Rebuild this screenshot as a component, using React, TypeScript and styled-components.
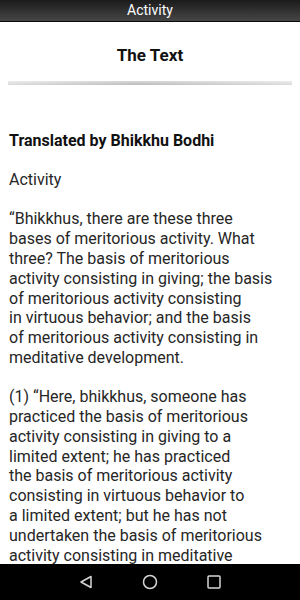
import {createGlobalStyle, styled} from 'styled-components';

const GlobalStyle = createGlobalStyle`
    html, body {
        margin: 0;
        padding: 0;
        background: #ffffff;
    }
    body {
        font-family: Roboto, 'Noto Sans', sans-serif;
    }
`

const Screen = styled.div`
    width: 300px;
    height: 600px;
    display: flex;
    flex-direction: column;
    overflow: hidden;
    background: #ffffff;
`

const TopBar = styled.header`
    height: 21px;
    flex: none;
    display: flex;
    align-items: center;
    justify-content: center;
    background: linear-gradient(180deg, #1b1b1b, #464646);
    border-bottom: 1px solid #0a0a0a;
    color: #ffffff;
    font-size: 14px;
    line-height: 21px;
`

const Content = styled.main`
    flex: 1;
    min-height: 0;
    overflow: hidden;
`

const Title = styled.h1`
    margin: 23px 0 16px;
    font-size: 17px;
    line-height: 20px;
    font-weight: bold;
    text-align: center;
    color: #111111;
`

const Divider = styled.div`
    height: 4px;
    margin: 0 8px;
    background:
        linear-gradient(180deg, rgba(255, 255, 255, 0.35), rgba(0, 0, 0, 0.04)),
        linear-gradient(90deg, #e3e3e3, #c2c2c2 45%, #d0d0d0 70%, #e3e3e3);
`

const Body = styled.section`
    padding: 46px 9px 0;
    display: flex;
    flex-direction: column;
    gap: 19.4px;
`

const Paragraph = styled.p<{$bold?: boolean}>`
    margin: 0;
    font-size: 16px;
    line-height: 19.8px;
    color: ${({$bold}) => ($bold ? '#111111' : '#262626')};
    font-weight: ${({$bold}) => ($bold ? 'bold' : 'normal')};
`

const Line = styled.span`
    display: block;
    white-space: nowrap;
`

const NavBar = styled.nav`
    height: 36px;
    flex: none;
    background: #000000;
    display: flex;
    align-items: center;
    justify-content: center;
`

const NavButton = styled.div`
    width: 64px;
    display: flex;
    justify-content: center;
    align-items: center;
`

const paragraphs: {bold?: boolean, lines: string[]}[] = [
    {bold: true, lines: ['Translated by Bhikkhu Bodhi']},
    {lines: ['Activity']},
    {
        lines: [
            '“Bhikkhus, there are these three',
            'bases of meritorious activity. What',
            'three? The basis of meritorious',
            'activity consisting in giving; the basis',
            'of meritorious activity consisting',
            'in virtuous behavior; and the basis',
            'of meritorious activity consisting in',
            'meditative development.',
        ],
    },
    {
        lines: [
            '(1) “Here, bhikkhus, someone has',
            'practiced the basis of meritorious',
            'activity consisting in giving to a',
            'limited extent; he has practiced',
            'the basis of meritorious activity',
            'consisting in virtuous behavior to',
            'a limited extent; but he has not',
            'undertaken the basis of meritorious',
            'activity consisting in meditative',
        ],
    },
]

export default function App() {
    return (
        <>
            <GlobalStyle/>
            <Screen>
                <TopBar>Activity</TopBar>
                <Content>
                    <Title>The Text</Title>
                    <Divider/>
                    <Body>
                        {paragraphs.map((p, i) => (
                            <Paragraph key={i} $bold={p.bold}>
                                {p.lines.map((line, j) => (
                                    <Line key={j}>{line}</Line>
                                ))}
                            </Paragraph>
                        ))}
                    </Body>
                </Content>
                <NavBar>
                    <NavButton>
                        <svg width="14" height="14" viewBox="0 0 14 14">
                            <path d="M12 1.5 L2 7 L12 12.5 Z" fill="none" stroke="#d6d6d6" strokeWidth="1.5" strokeLinejoin="round"/>
                        </svg>
                    </NavButton>
                    <NavButton>
                        <svg width="16" height="16" viewBox="0 0 16 16">
                            <circle cx="8" cy="8" r="6.5" fill="none" stroke="#d6d6d6" strokeWidth="1.5"/>
                        </svg>
                    </NavButton>
                    <NavButton>
                        <svg width="14" height="14" viewBox="0 0 14 14">
                            <rect x="1" y="1" width="12" height="12" rx="1" fill="none" stroke="#d6d6d6" strokeWidth="1.5"/>
                        </svg>
                    </NavButton>
                </NavBar>
            </Screen>
        </>
    )
}
